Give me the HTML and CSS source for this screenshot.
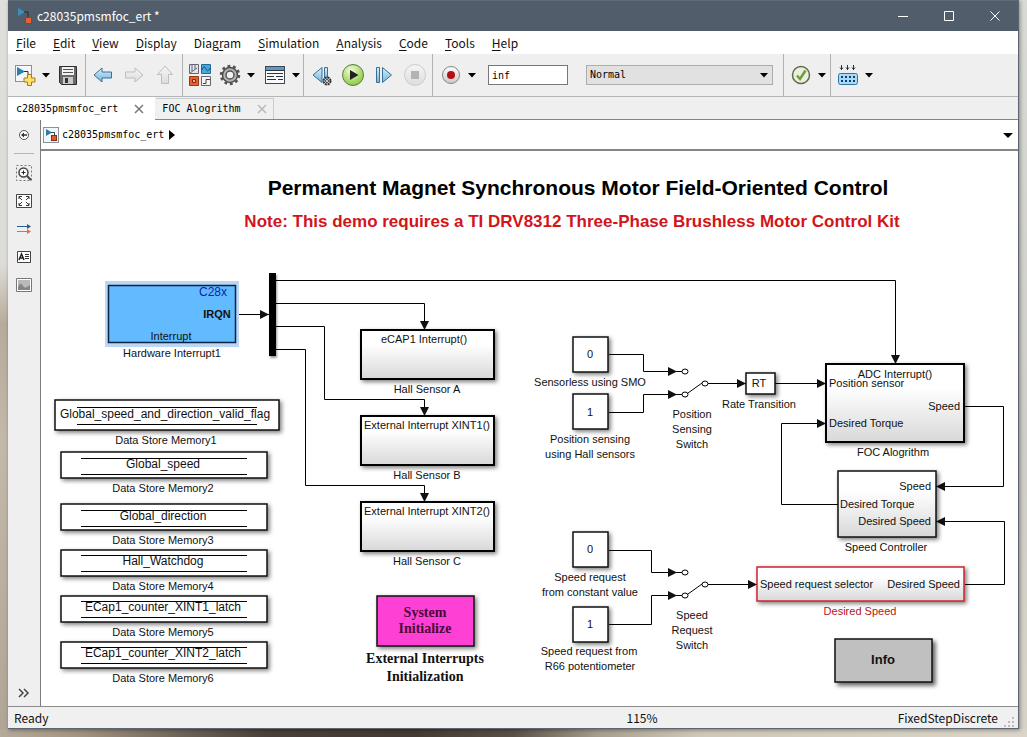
FILE: index.html
```html
<!DOCTYPE html>
<html lang="en">
<head>
<meta charset="utf-8">
<title>c28035pmsmfoc_ert *</title>
<link rel="stylesheet" href="styles.css">
</head>
<body>
<svg class="defs" aria-hidden="true">
  <defs>
    <linearGradient id="blue" x1="0" y1="0" x2="0" y2="1"><stop offset="0" stop-color="#d9effb"/><stop offset="1" stop-color="#6fb4dd"/></linearGradient>
    <linearGradient id="grey" x1="0" y1="0" x2="0" y2="1"><stop offset="0" stop-color="#fff"/><stop offset="1" stop-color="#c9c9c9"/></linearGradient>
    <linearGradient id="pale" x1="0" y1="0" x2="0" y2="1"><stop offset="0" stop-color="#f6f6f6"/><stop offset="1" stop-color="#dcdcdc"/></linearGradient>
    <radialGradient id="green" cx=".4" cy=".3" r=".8"><stop offset="0" stop-color="#f2fbd8"/><stop offset="1" stop-color="#7cc52c"/></radialGradient>
    <linearGradient id="sub" x1="0" y1="0" x2="0" y2="1"><stop offset=".3" stop-color="#fff"/><stop offset="1" stop-color="#d8d8d8"/></linearGradient>
    <symbol id="caret" viewBox="0 0 8 5"><path d="M0 0h8L4 4.500z"/></symbol>
    <symbol id="model" viewBox="0 0 16 16">
      <rect x=".5" y=".5" width="15" height="15" fill="#f4f6f8" stroke="#8a929a"/>
      <path d="M3 2l6 3.500L3 9z" fill="#2d7ba8"/><path d="M8 5.500h3.500V9" fill="none" stroke="#345"/><rect x="8.500" y="8.500" width="5" height="5" fill="#e2572c" stroke="#8c2d12"/>
    </symbol>
  </defs>
</svg>
<main class="window">
  <header class="titlebar">
    <svg class="app-icon" viewBox="0 0 16 16" aria-hidden="true"><path d="M1 0l7 4-7 4z" fill="#3b8fc0"/><path d="M7 4h4v5" fill="none" stroke="#222b35"/><rect x="8.500" y="9.500" width="6" height="6" fill="#e8602f" stroke="#a33a18"/></svg>
    <h1 class="window-title">c28035pmsmfoc_ert *</h1>
    <div class="window-controls">
      <button class="window-button" aria-label="Minimize"><svg width="12" height="12"><path d="M1 6.500h10"/></svg></button>
      <button class="window-button" aria-label="Maximize"><svg width="12" height="12"><path d="M1.500 1.500h9v9h-9z"/></svg></button>
      <button class="window-button" aria-label="Close"><svg width="12" height="12"><path d="M1.500 1.500l9 9m0-9l-9 9"/></svg></button>
    </div>
  </header>

  <nav class="menubar">
    <button><u>F</u>ile</button><button><u>E</u>dit</button><button><u>V</u>iew</button><button><u>D</u>isplay</button><button>Diag<u>r</u>am</button><button><u>S</u>imulation</button><button><u>A</u>nalysis</button><button><u>C</u>ode</button><button><u>T</u>ools</button><button><u>H</u>elp</button>
  </nav>

  <div class="toolbar" role="toolbar">
    <div class="group group-file">
      <div class="split">
        <button class="tool" aria-label="New model"><svg viewBox="0 0 24 24"><rect x="2.500" y="2.500" width="16" height="16" fill="#f4f8fb" stroke="#8292a2"/><path d="M4 4l8 4.500L4 13z" fill="#2c7fb0"/><path d="M11 8.500h4v4" fill="none" stroke="#234"/><path d="M14.500 11.500h4v3.500h3.500v4h-3.500v3.500h-4V19H11v-4h3.500z" fill="#ffe06a" stroke="#a67c12"/></svg></button>
        <button class="drop" aria-label="New options"><svg><use href="#caret"/></svg></button>
      </div>
      <button class="tool" aria-label="Save"><svg viewBox="0 0 24 24"><path d="M3.500 3.500h17v18H5.500l-2-2z" fill="#6a6a6a" stroke="#2c2c2c"/><rect x="6" y="4" width="12" height="8" fill="#f3f3f3"/><path d="M7 6.500h10M7 9.500h10" stroke="#555"/><rect x="7" y="14" width="10" height="7" fill="#c9c9c9"/><rect x="9" y="15" width="3" height="5" fill="#333"/></svg></button>
    </div>
    <div class="group group-nav">
      <button class="tool" aria-label="Back"><svg viewBox="0 0 24 24"><path d="M3 12l8-7v4h9.500v6H11v4z" fill="url(#blue)" stroke="#3a6f96"/></svg></button>
      <button class="tool" aria-label="Forward"><svg viewBox="0 0 24 24"><path d="M21 12l-8-7v4H3.500v6H13v4z" fill="url(#pale)" stroke="#bdbdbd"/></svg></button>
      <button class="tool" aria-label="Up to parent"><svg viewBox="0 0 24 24"><path d="M12 3l7.500 8.500h-4v9h-7v-9h-4z" fill="url(#pale)" stroke="#bdbdbd"/></svg></button>
    </div>
    <div class="group group-lib">
      <button class="tool" aria-label="Library browser"><svg viewBox="0 0 24 24"><path d="M1.500 1.500h9v9h-9z" fill="#dfe4e8" stroke="#667"/><path d="M4 2v6m3-6v4m-5 4l7-5" stroke="#667" fill="none"/><path d="M13.500 1.500h9v9h-9z" fill="#49a7dc" stroke="#236a96"/><path d="M14 7c2-5 3-3 4-1s2 3 4-1" fill="none" stroke="#124c74"/><path d="M1.500 13.500h9v9h-9z" fill="#e8602f" stroke="#9b3413"/><path d="M4.500 16.500h3v3h-3z" fill="#f9b498" stroke="#7e260b"/><path d="M13.500 13.500h9v9h-9z" fill="#f4f4f4" stroke="#667"/><path d="M15 20.500h3v-4h4" fill="none" stroke="#444"/></svg></button>
      <div class="split">
        <button class="tool" aria-label="Model configuration"><svg viewBox="0 0 24 24"><circle cx="12" cy="12" r="9" fill="none" stroke="#555" stroke-width="2.500" stroke-dasharray="2.830 2.825"/><circle cx="12" cy="12" r="7.500" fill="#b5b5b5" stroke="#4d4d4d" stroke-width="1.500"/><circle cx="12" cy="12" r="4" fill="#f2f2f2" stroke="#555" stroke-width="1.500"/></svg></button>
        <button class="drop" aria-label="Configuration options"><svg><use href="#caret"/></svg></button>
      </div>
      <div class="split">
        <button class="tool" aria-label="Model explorer"><svg viewBox="0 0 24 24"><rect x="2.500" y="3.500" width="19" height="17" fill="#f7f9fb" stroke="#3b4754"/><path d="M3 4h18v3H3z" fill="#5b9bc6"/><path d="M3 7.500h18M4 10.500h16M4 13.500h7m2 0h7M4 16.500h9m2 0h5" stroke="#2b3440"/></svg></button>
        <button class="drop" aria-label="Explorer options"><svg><use href="#caret"/></svg></button>
      </div>
    </div>
    <div class="group group-run">
      <button class="tool" aria-label="Step back options"><svg viewBox="0 0 24 24"><path d="M12 4.500v15L3 12z" fill="url(#blue)" stroke="#3a6f96"/><path d="M14.500 4.500h3v12h-3z" fill="url(#blue)" stroke="#3a6f96"/><circle cx="17" cy="18" r="3.500" fill="#ddd" stroke="#333" stroke-width="2" stroke-dasharray="2 .750"/><circle cx="17" cy="18" r="1.500" fill="#fff" stroke="#444"/></svg></button>
      <button class="tool" aria-label="Run"><svg viewBox="0 0 24 24"><circle cx="12" cy="12" r="10.500" fill="url(#green)" stroke="#5f7d3d"/><path d="M9 7l8.500 5L9 17z" fill="#222"/></svg></button>
      <button class="tool" aria-label="Step forward"><svg viewBox="0 0 24 24"><path d="M4.500 4.500h3v15h-3zM10.500 4.500v15l9-7.500z" fill="url(#blue)" stroke="#3a6f96"/></svg></button>
      <button class="tool" aria-label="Stop"><svg viewBox="0 0 24 24"><circle cx="12" cy="12" r="10.500" fill="url(#pale)" stroke="#cdcdcd"/><path d="M8 8h8v8H8z" fill="#b3b3b3"/></svg></button>
    </div>
    <div class="group group-mode">
      <div class="split">
        <button class="tool" aria-label="Record"><svg viewBox="0 0 24 24"><circle cx="12" cy="12" r="8.500" fill="url(#grey)" stroke="#858585"/><circle cx="12" cy="12" r="4" fill="#b30f14"/></svg></button>
        <button class="drop" aria-label="Record options"><svg><use href="#caret"/></svg></button>
      </div>
      <input class="stop-time" type="text" value="inf" aria-label="Stop time">
      <div class="mode">
        <select class="mode-select" aria-label="Simulation mode"><option>Normal</option></select>
        <svg class="mode-caret" aria-hidden="true"><use href="#caret"/></svg>
      </div>
    </div>
    <div class="group group-check">
      <div class="split">
        <button class="tool" aria-label="Model advisor"><svg viewBox="0 0 24 24"><circle cx="12" cy="12" r="8.500" fill="#e9efdc" stroke="#5d6b4c" stroke-width="1.500"/><path d="M8 12.500l3 3.500 5.500-8.500" fill="none" stroke="#739b3c" stroke-width="2.500"/></svg></button>
        <button class="drop" aria-label="Advisor options"><svg><use href="#caret"/></svg></button>
      </div>
    </div>
    <div class="group group-build">
      <div class="split">
        <button class="tool" aria-label="Build model"><svg viewBox="0 0 24 24"><path d="M5.500 2v5m6-5v5m6-5v5M4 4.500l1.500 2 1.500-2m3 0l1.500 2 1.500-2m3 0l1.500 2 1.500-2" fill="none" stroke="#1d3348"/><rect x="2.500" y="10.500" width="19" height="11" rx="2" fill="#a9dbf8" stroke="#2b75a8"/><path d="M5 14h14M5 18h14" stroke="#143f63" stroke-width="2" stroke-dasharray="2 2"/></svg></button>
        <button class="drop" aria-label="Build options"><svg><use href="#caret"/></svg></button>
      </div>
    </div>
  </div>

  <div class="tabs">
    <div class="tab tab-active"><button class="tab-name">c28035pmsmfoc_ert</button><button class="tab-close" aria-label="Close c28035pmsmfoc_ert"><svg width="10" height="10"><path d="M1 1l8 8m0-8l-8 8"/></svg></button></div>
    <div class="tab"><button class="tab-name">FOC Alogrithm</button><button class="tab-close" aria-label="Close FOC Alogrithm"><svg width="10" height="10"><path d="M1 1l8 8m0-8l-8 8"/></svg></button></div>
  </div>

  <div class="workspace">
    <aside class="palette">
      <button class="palette-button" aria-label="Hide browser"><svg width="16" height="16"><circle cx="8" cy="8" r="4.500" fill="#fff" stroke="#555"/><path d="M5 8l3-2.500v1.750h3v1.500H8v1.750z" fill="#333"/></svg></button>
      <hr class="palette-rule">
      <div class="palette-tools">
        <button class="palette-button" aria-label="Zoom"><svg width="16" height="16"><path d="M.5.5h15v15H.5z" fill="none" stroke="#777" stroke-dasharray="2 2"/><circle cx="7.500" cy="7.500" r="4.500" fill="#fff" stroke="#444" stroke-width="1.500"/><path d="M5.500 7.500h4m-2-2v4" stroke="#222"/><path d="M11 11l4 4" stroke="#444" stroke-width="2"/></svg></button>
        <button class="palette-button" aria-label="Fit to view"><svg width="16" height="16"><path d="M.5 1.500h15v13H.5z" fill="#fff" stroke="#444"/><path d="M3 6V3.500h3M10 3.500h3V6M3 10v2.500h3m4 0h3V10M3 4l3 3m7-3l-3 3m-7 5l3-3m7 3l-3-3" fill="none" stroke="#333"/></svg></button>
        <button class="palette-button" aria-label="Signal lines"><svg width="16" height="16"><path d="M1 5.500h12" stroke="#2c5c8c"/><path d="M11 3l4 2.500L11 8z" fill="#2c5c8c"/><path d="M1 10.500h12" stroke="#e0703c"/><path d="M11 8l4 2.500-4 2.500z" fill="#e0703c"/></svg></button>
        <button class="palette-button" aria-label="Annotation"><svg width="16" height="16"><path d="M1.500 2.500h13v11h-13z" fill="#fff" stroke="#444"/><path d="M3 11l2.500-6L8 11M4 9h3" fill="none" stroke="#222" stroke-width="1.500"/><path d="M9 5.500h4m-4 2h4m-4 2h4" stroke="#333"/></svg></button>
        <button class="palette-button" aria-label="Image"><svg width="16" height="16"><path d="M.5 1.500h15v13H.5z" fill="#fff" stroke="#777"/><path d="M2 3h12v10H2z" fill="#b9b9b9"/><path d="M2 10c3-6 4-2 6 0s4-1 6-2v5H2z" fill="#858585"/></svg></button>
      </div>
      <button class="palette-button palette-more" aria-label="More"><svg width="16" height="16"><path d="M3 4l4 4-4 4m5-8l4 4-4 4" fill="none" stroke="#444" stroke-width="1.500"/></svg></button>
    </aside>

    <section class="editor">
      <div class="breadcrumb">
        <svg class="crumb-icon" aria-hidden="true"><use href="#model"/></svg>
        <a class="crumb" href="#model-root">c28035pmsmfoc_ert</a>
        <svg class="crumb-arrow" width="6" height="10" aria-hidden="true"><path d="M0 0l6 5-6 5z"/></svg>
        <button class="crumb-menu" aria-label="Path history"><svg width="10" height="5"><path d="M0 0h10L5 5z"/></svg></button>
      </div>
      <div class="canvas" id="model-root">
        <svg class="diagram" viewBox="41 151 970 550" width="970" height="550" role="img" aria-label="Motor control model">
          <defs>
            <marker id="arrow" viewBox="0 0 9 10" markerWidth="9" markerHeight="10" refX="9" refY="5" orient="auto" markerUnits="userSpaceOnUse"><path d="M0 0.500L9 5 0 9.500z"/></marker>
          </defs>
          <text class="model-title" x="578" y="195">Permanent Magnet Synchronous Motor Field-Oriented Control</text>
          <text class="model-note" x="572" y="227">Note: This demo requires a TI DRV8312 Three-Phase Brushless Motor Control Kit</text>

          <g class="wires">
            <path d="M236 314.500H269"/>
            <path d="M276 280.500H895.500V364"/>
            <path d="M276 303.500H424.500V330"/>
            <path d="M276 326.500H324.500V399.500H424.500V416"/>
            <path d="M276 349.500H305.500V485.500H424.500V502"/>
            <path d="M609 354.500H643.500V371.500H677"/>
            <path d="M609 412.500H643.500V394.500H677"/>
            <path d="M712 383.500H746"/>
            <path d="M775 383.500H826"/>
            <path d="M965 406.500H1003.500V486.500H936"/>
            <path d="M838 504.500H781.500V423.500H826"/>
            <path d="M609 550.500H651.500V572.500H677"/>
            <path d="M609 624.500H651.500V595.500H677"/>
            <path d="M712 584.500H757"/>
            <path d="M965 584.500H1004.500V521.500H936"/>
          </g>
          <g class="switches">
            <path d="M677 371.500h5M677 394.500h5M688 393l14-10M708 383.500h4"/>
            <ellipse cx="685" cy="371.500" rx="3" ry="2.500"/><ellipse cx="685" cy="394.500" rx="3" ry="2.500"/><ellipse cx="705" cy="383.500" rx="3" ry="2.500"/>
            <path d="M677 572.500h5M677 595.500h5M688 594l14-10M708 584.500h4"/>
            <ellipse cx="685" cy="572.500" rx="3" ry="2.500"/><ellipse cx="685" cy="595.500" rx="3" ry="2.500"/><ellipse cx="705" cy="584.500" rx="3" ry="2.500"/>
          </g>

          <rect class="selection" x="105" y="281" width="134" height="66"/>
          <rect class="interrupt" x="108.500" y="285.500" width="127" height="57"/>
          <g class="blocks">
            <rect class="mux" x="269" y="273" width="7" height="83"/>
            <rect class="block" x="55" y="400" width="224" height="30"/>
            <rect class="block" x="61" y="452" width="206" height="26"/>
            <rect class="block" x="61" y="504" width="206" height="26"/>
            <rect class="block" x="61" y="550" width="206" height="26"/>
            <rect class="block" x="61" y="596" width="206" height="26"/>
            <rect class="block" x="61" y="642" width="206" height="26"/>
            <rect class="block atomic" x="361" y="330" width="133" height="49"/>
            <rect class="block atomic" x="361" y="416" width="133" height="49"/>
            <rect class="block atomic" x="361" y="502" width="133" height="49"/>
            <rect class="block" x="573" y="337" width="35" height="35"/>
            <rect class="block" x="573" y="394" width="35" height="35"/>
            <rect class="block" x="573" y="532" width="35" height="35"/>
            <rect class="block" x="573" y="607" width="35" height="35"/>
            <rect class="block" x="746" y="373" width="29" height="21"/>
            <rect class="block atomic" x="826" y="364" width="138" height="78"/>
            <rect class="block subsystem" x="838" y="471" width="98" height="66"/>
            <rect class="block desired" x="757" y="567" width="207" height="34"/>
            <rect class="block init" x="377" y="596" width="97" height="50"/>
            <rect class="block info" x="835" y="639" width="97" height="43"/>
          </g>
          <path class="rules" d="M77 407.500H257M77 424.500H257M81 458.500H247M81 474.500H247M81 510.500H247M81 526.500H247M81 555.500H247M81 571.500H247M81 601.500H247M81 617.500H247M81 647.500H247M81 663.500H247"/>

          <g class="data">
            <text x="213" y="296" class="chip">C28x</text>
            <text x="165" y="418">Global_speed_and_direction_valid_flag</text>
            <text x="163" y="468">Global_speed</text>
            <text x="163" y="520">Global_direction</text>
            <text x="163" y="565">Hall_Watchdog</text>
            <text x="163" y="611">ECap1_counter_XINT1_latch</text>
            <text x="163" y="657">ECap1_counter_XINT2_latch</text>
          </g>
          <g class="label">
            <text x="217" y="318" class="strong">IRQN</text>
            <text x="171" y="340">Interrupt</text>
            <text x="172" y="357">Hardware Interrupt1</text>
            <text x="166" y="444">Data Store Memory1</text>
            <text x="163" y="492">Data Store Memory2</text>
            <text x="163" y="544">Data Store Memory3</text>
            <text x="163" y="590">Data Store Memory4</text>
            <text x="163" y="636">Data Store Memory5</text>
            <text x="163" y="682">Data Store Memory6</text>
            <text x="427" y="393">Hall Sensor A</text>
            <text x="427" y="479">Hall Sensor B</text>
            <text x="427" y="565">Hall Sensor C</text>
            <text x="590" y="358">0</text>
            <text x="590" y="386">Sensorless using SMO</text>
            <text x="590" y="416">1</text>
            <text x="590" y="443">Position sensing</text>
            <text x="590" y="458">using Hall sensors</text>
            <text x="692" y="418">Position</text>
            <text x="692" y="433">Sensing</text>
            <text x="692" y="448">Switch</text>
            <text x="759" y="387">RT</text>
            <text x="759" y="408">Rate Transition</text>
            <text x="893" y="456">FOC Alogrithm</text>
            <text x="886" y="551">Speed Controller</text>
            <text x="590" y="553">0</text>
            <text x="590" y="581">Speed request</text>
            <text x="590" y="596">from constant value</text>
            <text x="590" y="628">1</text>
            <text x="589" y="655">Speed request from</text>
            <text x="590" y="670">R66 potentiometer</text>
            <text x="692" y="619">Speed</text>
            <text x="692" y="634">Request</text>
            <text x="692" y="649">Switch</text>
            <text x="860" y="615" class="desired-name">Desired Speed</text>
          </g>
          <g class="port">
            <text x="424" y="343" class="centered">eCAP1 Interrupt()</text>
            <text x="427" y="429" class="centered">External Interrupt XINT1()</text>
            <text x="427" y="515" class="centered">External Interrupt XINT2()</text>
            <text x="895" y="378" class="centered">ADC Interrupt()</text>
            <text x="829" y="387">Position sensor</text>
            <text x="829" y="427">Desired Torque</text>
            <text x="960" y="410" class="output">Speed</text>
            <text x="931" y="490" class="output">Speed</text>
            <text x="840" y="508">Desired Torque</text>
            <text x="931" y="525" class="output">Desired Speed</text>
            <text x="760" y="588">Speed request selector</text>
            <text x="960" y="588" class="output">Desired Speed</text>
          </g>
          <g class="serif">
            <text x="425" y="617" class="init-name">System</text>
            <text x="425" y="633" class="init-name">Initialize</text>
            <text x="425" y="663">External Interrupts</text>
            <text x="425" y="681">Initialization</text>
          </g>
          <text class="info-name" x="883" y="664">Info</text>
        </svg>
      </div>
    </section>
  </div>

  <footer class="statusbar">
    <span>Ready</span><span class="zoom-level">115%</span><span class="solver">FixedStepDiscrete</span>
    <svg class="grip" width="12" height="12" aria-hidden="true"><path d="M8 1h2v2H8zM8 5h2v2H8zM4 5h2v2H4zM8 9h2v2H8zM4 9h2v2H4zM0 9h2v2H0z"/></svg>
  </footer>
</main>
</body>
</html>
```
FILE: styles.css
```css
* { box-sizing: border-box; }

body {
  display: flex;
  height: 100vh;
  margin: 0;
  padding: 0 8px 8px;
  background:
    linear-gradient(90deg, #b5aa99, #a0937f 8%, #6d6257 18%, #4b4039 26%, #443a33 40%, #5a5047 50%, #a59c8c 58%, #cfc8b8 68%, #dad5c8) bottom / 100% 8px no-repeat,
    linear-gradient(#dfe0dc, #dddcd6 36%, #b7ab9b 44%, #c3b9aa 60%, #b0a595) left / 8px 100% no-repeat,
    linear-gradient(#d9d9d5, #cfcec8 60%, #d8d3c6);
  color: #111;
  font: 12px/18px "Noto Sans CJK SC", "Open Sans", sans-serif;
}

button, input, select {
  margin: 0;
  padding: 0;
  border: 0;
  border-radius: 0;
  background: none;
  color: inherit;
  font: inherit;
}

svg { display: block; }
.defs { position: absolute; width: 0; height: 0; }

.window {
  display: flex;
  flex: 1;
  flex-direction: column;
  min-width: 0;
  border: solid #5c6672;
  border-width: 0 1px 1px 0;
  background: #efefef;
  box-shadow: 1px 1px 4px rgba(0, 0, 0, .4);
}

.titlebar {
  display: flex;
  align-items: center;
  height: 31px;
  padding-left: 9px;
  border-top: 1px solid #5e6b78;
  background: #515d6b;
  color: #fff;
}
.app-icon { width: 16px; height: 16px; }
.window-title { margin: 0 auto 0 4px; font-size: 12px; font-weight: 400; }
.window-controls { display: flex; }
.window-button { display: grid; place-items: center; width: 46px; height: 30px; }
.window-button svg { fill: none; stroke: #fff; }

.menubar { display: flex; gap: 17px; height: 23px; padding: 0 8px; background: #fff; }
.menubar button { line-height: 22px; }
.menubar u { text-underline-offset: 2px; }

.toolbar { display: flex; height: 43px; border-bottom: 1px solid #b4b7ba; background: #efefef; }
.group { display: flex; align-items: center; border-right: 1px solid #b0b3b6; }
.group-file { gap: 4px; padding: 0 5px; }
.group-nav { gap: 7px; padding: 0 5px; }
.group-lib { gap: 6px; padding: 0 1px 0 5px; }
.group-run { gap: 7px; padding: 0 5px 0 6px; }
.group-mode { padding: 0 10px 0 6px; }
.group-check { padding: 0 2px 0 5px; }
.group-build { padding: 0 5px; border-right: 0; }
.split { display: flex; align-items: center; gap: 3px; }
.tool, .tool svg { width: 24px; height: 24px; }
.drop { display: grid; place-items: center; width: 12px; height: 24px; }
.drop svg, .mode-caret { width: 8px; height: 5px; }
.stop-time, .mode-select { height: 20px; font: 10px/18px "DejaVu Sans Mono", monospace; color: #000; }
.stop-time { width: 80px; margin: 0 18px 0 10px; padding: 0 3px; border: 1px solid #777; background: #fff; }
.mode { position: relative; width: 187px; }
.mode-select { display: block; width: 100%; padding: 0 20px 0 3px; border: 1px solid #adadad; background: #e1e1e1; appearance: none; }
.mode-caret { position: absolute; top: 8px; right: 5px; pointer-events: none; }

.tabs { display: flex; align-items: stretch; height: 23px; border-bottom: 1px solid #858585; font: 10px/12px "DejaVu Sans Mono", monospace; color: #000; }
.tab { display: flex; align-items: center; gap: 16px; margin: 1px 0 0; padding: 0 6px; border: solid #ccc; border-width: 1px 1px 0 0; background: #f0f0f0; }
.tab-active { gap: 16px; margin: 0 1px -1px 0; padding: 0 11px 0 8px; border: 0; background: #fff; }
.tab-close svg { fill: none; stroke: #b8b8b8; stroke-width: 1.5; }
.tab-active .tab-close svg { stroke: #777; }

.workspace { display: flex; flex: 1; min-height: 0; }
.palette { display: flex; flex-direction: column; align-items: center; width: 32px; padding: 7px 0 5px; }
.palette-button { width: 16px; height: 16px; }
.palette-rule { width: 20px; margin: 10px 0 11px; border: 0; border-top: 1px solid #b5b5b5; }
.palette-tools { display: flex; flex-direction: column; gap: 12px; }
.palette-more { margin-top: auto; }
.editor { display: flex; flex: 1; flex-direction: column; min-width: 0; border-left: 1px solid #7c7c7c; background: #fff; }
.breadcrumb { display: flex; align-items: center; height: 31px; padding: 1px 5px 0 2px; border-bottom: 2px solid #858585; font: 10px/12px "DejaVu Sans Mono", monospace; }
.crumb-icon { width: 16px; height: 16px; }
.crumb { margin: 0 5px 0 3px; color: #000; text-decoration: none; }
.crumb-menu { margin-left: auto; }
.canvas { flex: 1; min-height: 0; overflow: auto; }

.diagram { font-family: "Liberation Sans", Arial, sans-serif; fill: #111; }
.model-title { font: 700 21px "Liberation Sans", Arial, sans-serif; fill: #000; text-anchor: middle; }
.model-note { font-size: 17px; font-weight: 700; fill: #d2151b; text-anchor: middle; }
.wires path { fill: none; stroke: #000; marker-end: url(#arrow); }
.switches { fill: #fff; stroke: #000; }
.selection { fill: #bcd7f3; }
.interrupt { fill: #63bbff; stroke: #0b2340; stroke-width: 1.5px; }
.mux { fill: #000; filter: drop-shadow(1px 2px 1px rgba(0, 0, 0, .4)); }
.block { fill: #fff; stroke: #111; stroke-width: 1.5px; filter: drop-shadow(2px 2px 2px rgba(0, 0, 0, .5)); }
.atomic { fill: url(#sub); stroke: #000; stroke-width: 2px; }
.subsystem { fill: url(#sub); }
.desired { fill: url(#sub); stroke: #cf2330; }
.init { fill: #ff40d4; }
.info { fill: #c0c0c0; filter: drop-shadow(3px 3px 2px rgba(0, 0, 0, .6)); }
.rules { stroke: #000; }
.data { font-size: 12px; text-anchor: middle; }
.label { font-size: 11px; text-anchor: middle; }
.chip { fill: #0a22b4; }
.strong { font-weight: 700; }
.desired-name { fill: #b3151c; }
.port { font-size: 11px; }
.centered { text-anchor: middle; }
.output { text-anchor: end; }
.serif { font: 700 14px "Liberation Serif", serif; text-anchor: middle; }
.init-name { fill: #4a0838; }
.info-name { font-size: 13px; font-weight: 700; text-anchor: middle; }

.statusbar { display: grid; grid-template-columns: 1fr auto 1fr auto; align-items: center; height: 22px; padding: 0 2px 0 6px; border-top: 1px solid #8c8c8c; background: #f0f0f0; }
.zoom-level { padding-left: 266px; }
.solver { padding-right: 6px; text-align: right; }
.grip { align-self: end; fill: #bbb; }
```
